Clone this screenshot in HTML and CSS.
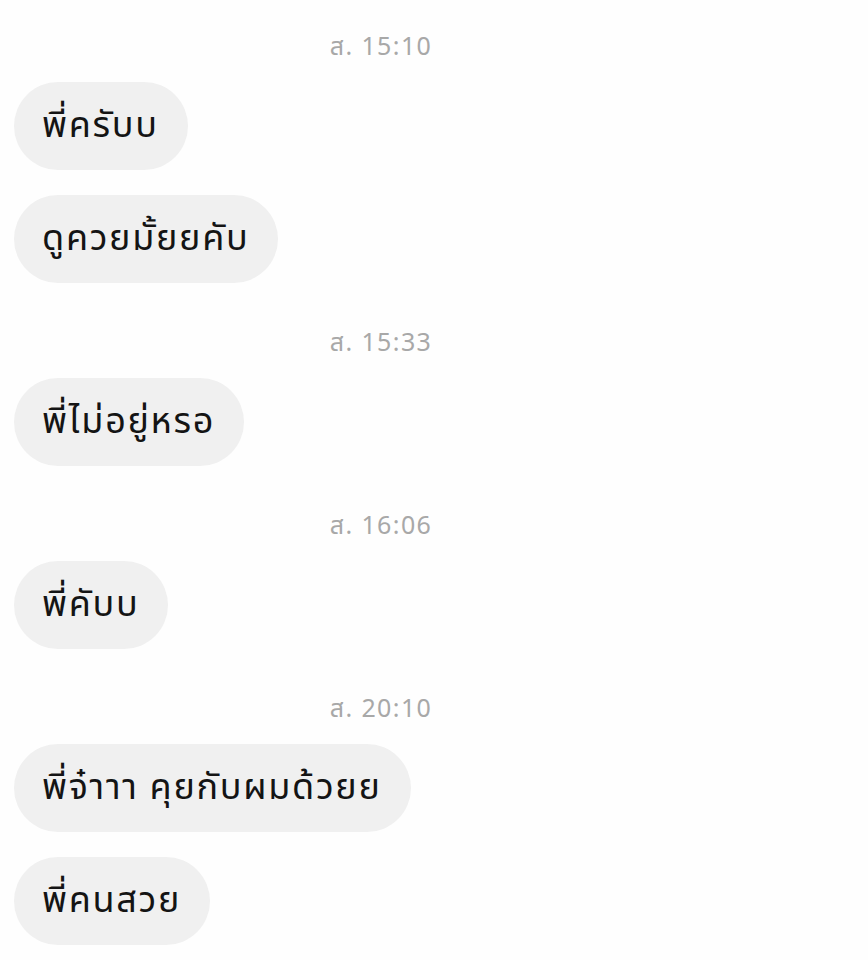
FILE: index.html
```html
<!DOCTYPE html>
<html lang="th">
<head>
<meta charset="utf-8">
<link rel="stylesheet" href="styles.css">
</head>
<body>
<div class="chat">
  <div class="stamp">ส. 15:10</div>
  <div class="msg">พี่ครับบ</div>
  <div class="msg">ดูควยมั้ยยคับ</div>
  <div class="stamp">ส. 15:33</div>
  <div class="msg">พี่ไม่อยู่หรอ</div>
  <div class="stamp">ส. 16:06</div>
  <div class="msg">พี่คับบ</div>
  <div class="stamp">ส. 20:10</div>
  <div class="msg">พี่จ๋าาา คุยกับผมด้วยย</div>
  <div class="msg">พี่คนสวย</div>
</div>
</body>
</html>
```

FILE: styles.css
```css
html, body {
  margin: 0;
  padding: 0;
  background: #fefefe;
}
.chat {
  display: flex;
  flex-direction: column;
  align-items: flex-start;
  gap: 25px;
  padding: 32px 14px 0 14px;
  font-family: "Noto Sans Thai", "Thonburi", "Loma", "Garuda", "Noto Sans", sans-serif;
}
.stamp {
  align-self: stretch;
  width: 734px;
  text-align: center;
  height: 30px;
  line-height: 30px;
  font-family: "Noto Sans Thai", "Noto Sans", sans-serif;
  font-size: 25px;
  letter-spacing: 1.4px;
  color: #a8a8a8;
  margin-top: 20px;
  margin-bottom: -5px;
}
.stamp:first-child {
  margin-top: 0;
}
.msg {
  background: #f0f0f0;
  color: #141414;
  font-size: 36px;
  letter-spacing: 1.7px;
  line-height: 44px;
  padding: 22px 29px 22px 28px;
  border-radius: 44px;
}
```
